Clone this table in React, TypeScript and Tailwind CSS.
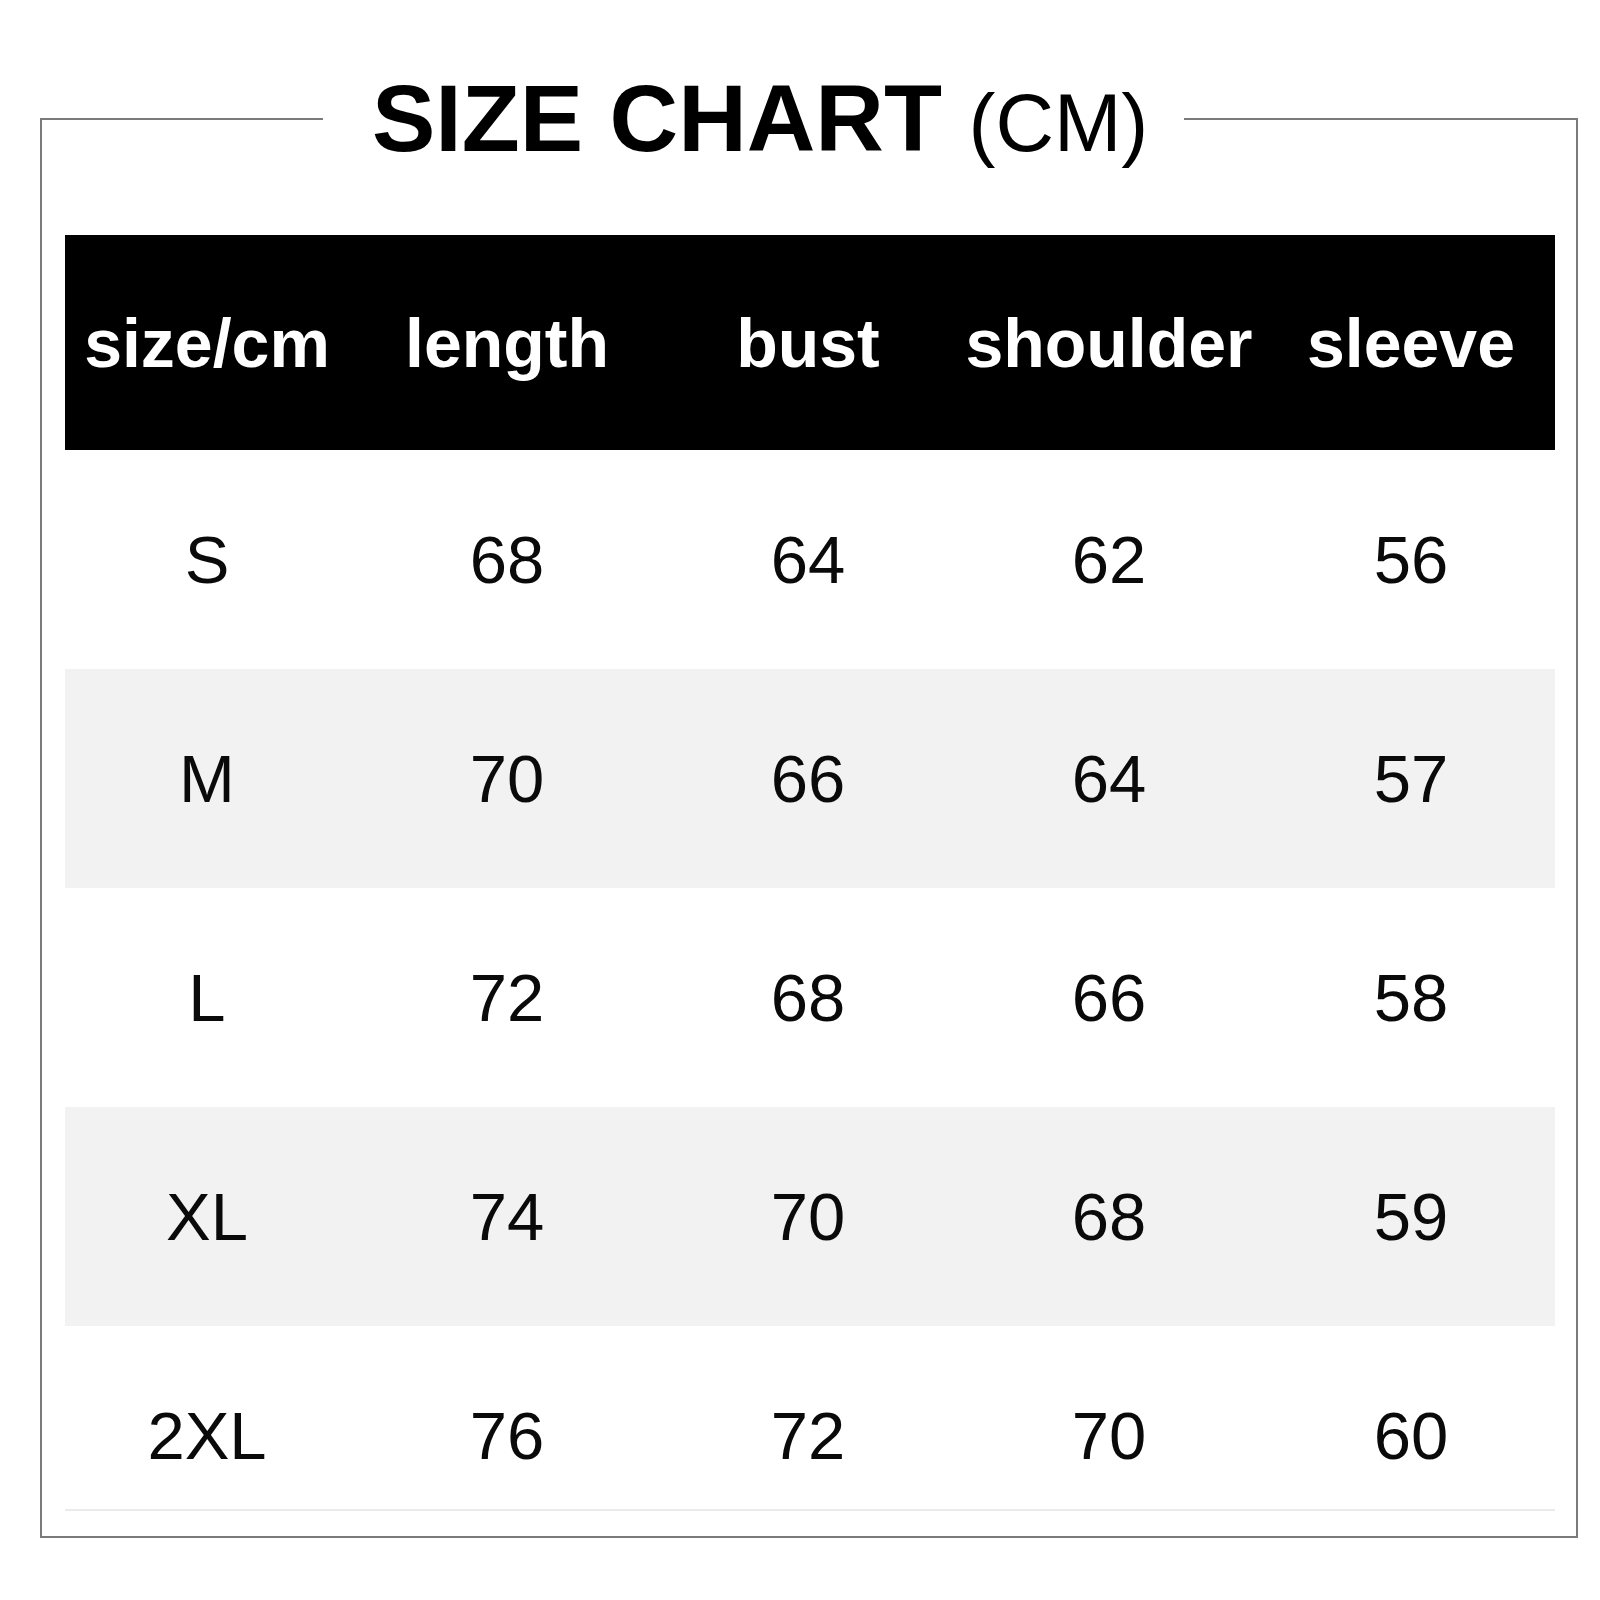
import React from "react";

const headers = ["size/cm", "length", "bust", "shoulder", "sleeve"];
const rows = [
  ["S", "68", "64", "62", "56"],
  ["M", "70", "66", "64", "57"],
  ["L", "72", "68", "66", "58"],
  ["XL", "74", "70", "68", "59"],
  ["2XL", "76", "72", "70", "60"],
];

const gridCols = "grid grid-cols-[284px_316px_286px_316px_288px]";

export default function App() {
  return (
    <div className="w-[1600px] h-[1600px] bg-white pt-[70px] pl-[40px] font-['Liberation_Sans',Arial,sans-serif] text-black">
      <div className="w-[1538px]">
        {/* Title row with broken top border */}
        <div className="flex h-[96px]">
          <div className="w-[283px] h-[48px] self-end border-t-2 border-l-2 border-[#7b7b7b]" />
          <div className="ml-[49px] whitespace-nowrap text-[95px] font-bold leading-[96px]">
            SIZE CHART{" "}
            <span className="text-[81px] font-normal leading-none">(CM)</span>
          </div>
          <div className="ml-[36px] flex-1 h-[48px] self-end border-t-2 border-r-2 border-[#7b7b7b]" />
        </div>
        {/* Frame body */}
        <div className="h-[1372px] border-l-2 border-r-2 border-b-2 border-[#7b7b7b] pt-[69px] pl-[23px]">
          <div className="w-[1490px] h-[1276px] overflow-hidden border-b-2 border-[#ebebeb]">
            <div className={`${gridCols} h-[215px] bg-black text-white items-center`}>
              {headers.map((h) => (
                <div key={h} className="text-center text-[68px] font-bold leading-none">
                  {h}
                </div>
              ))}
            </div>
            {rows.map((r, i) => (
              <div
                key={r[0]}
                className={`${gridCols} h-[219px] items-center ${i % 2 === 1 ? "bg-[#f2f2f2]" : "bg-white"}`}
              >
                {r.map((c, j) => (
                  <div key={j} className="text-center text-[67px] leading-none text-[#0a0a0a]">
                    {c}
                  </div>
                ))}
              </div>
            ))}
          </div>
        </div>
      </div>
    </div>
  );
}
